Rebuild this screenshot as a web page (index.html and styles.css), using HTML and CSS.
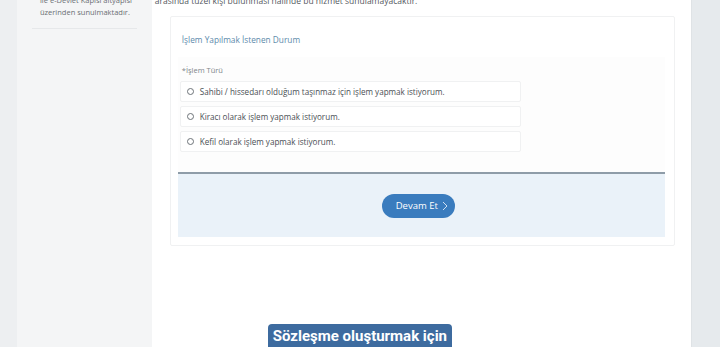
FILE: index.html
```html
<!DOCTYPE html>
<html>

<head>
    <meta charset="UTF-8">
    <title>İşlem Yapılmak İstenen Durum</title>
    <link rel="stylesheet" href="styles.css">
</head>

<body>
    <div id="edgeLeft"></div>
    <div id="sidebar">
        <p class="sideNote">ile e-Devlet Kapısı altyapısı<br>üzerinden sunulmaktadır.</p>
        <div class="sideRule"></div>
    </div>

    <div id="main">
        <p class="intro">arasında tüzel kişi bulunması halinde bu hizmet sunulamayacaktır.</p>

        <form id="durumForm" class="card">
            <div class="cardTitle">İşlem Yapılmak İstenen Durum</div>
            <div class="cardBody">
                <div class="fieldLabel">*İşlem Türü</div>
                <label class="option"><span class="radio"></span>Sahibi / hissedarı olduğum taşınmaz için işlem yapmak istiyorum.</label>
                <label class="option"><span class="radio"></span>Kiracı olarak işlem yapmak istiyorum.</label>
                <label class="option"><span class="radio"></span>Kefil olarak işlem yapmak istiyorum.</label>
            </div>
            <div class="cardFooter">
                <button type="button" class="nextButton">Devam Et
                    <svg width="6" height="10" viewBox="0 0 6 10"><path d="M1 1 L5 5 L1 9" fill="none" stroke="#cfe0f2" stroke-width="1"/></svg>
                </button>
            </div>
        </form>

        <div class="caption">Sözleşme oluşturmak için</div>
    </div>

    <div id="edgeRight"></div>
</body>

</html>
```

FILE: styles.css
```css
body {
    display: flex;
    margin: 0;
    height: 347px;
    overflow: hidden;
    font-family: "Open Sans", "Liberation Sans", sans-serif;
    background-color: #eef0f2;
}

#edgeLeft {
    width: 17px;
    background-color: #edeff1;
}

#sidebar {
    width: 135px;
    background-color: #f4f5f6;
}

.sideNote {
    margin: -6px 0 0 23px;
    font-size: 7.5px;
    line-height: 12px;
    color: #6a6f74;
}

.sideRule {
    height: 1px;
    margin: 10px 15px 0 15px;
    background-color: #e6e8ea;
}

#main {
    position: relative;
    width: 540px;
    background-color: #ffffff;
}

.intro {
    margin: -5px 0 0 3px;
    font-size: 8.5px;
    line-height: 12px;
    color: #555a5f;
}

.card {
    width: 487px;
    margin: 9px 0 0 18px;
    padding: 0 9px 8px 7px;
    border: 1px solid #f0f1f2;
    border-radius: 2px;
}

.cardTitle {
    padding: 17px 0 0 4px;
    height: 23px;
    font-size: 8.3px;
    color: #5d8aab;
}

.cardBody {
    padding: 6px 0 20px 0;
    background-color: #fdfdfd;
}

.fieldLabel {
    margin-left: 4px;
    font-size: 7.5px;
    line-height: 14px;
    color: #80868b;
}

.option {
    display: flex;
    align-items: center;
    width: 333px;
    height: 19px;
    margin: 4px 0 0 2px;
    padding-left: 6px;
    border: 1px solid #f0f1f2;
    border-radius: 2px;
    background-color: #ffffff;
    font-size: 8.1px;
    color: #4a4f54;
}

.option + .option {
    margin-top: 4px;
}

.radio {
    width: 5px;
    height: 5px;
    margin-right: 6px;
    border: 1px solid #6d7378;
    border-radius: 50%;
}

.cardFooter {
    display: flex;
    justify-content: center;
    align-items: center;
    height: 63px;
    border-top: 2px solid #8e9ca8;
    background-color: #eaf2f9;
}

.nextButton {
    display: flex;
    align-items: center;
    gap: 4px;
    height: 24px;
    margin-right: 6px;
    padding: 0 7px 0 14px;
    border: none;
    border-radius: 12px;
    background-color: #3a7cbe;
    font-family: "Open Sans", "Liberation Sans", sans-serif;
    font-size: 9.5px;
    color: #ffffff;
}

.caption {
    position: absolute;
    left: 116px;
    bottom: -3px;
    padding: 2px 5px 4px 5px;
    border-radius: 4px;
    background-color: #3d6b9f;
    font-family: Roboto, "Liberation Sans", sans-serif;
    font-weight: bold;
    font-size: 15px;
    line-height: 20px;
    color: #ffffff;
}

#edgeRight {
    width: 28px;
    border-left: 1px solid #dfe3e6;
    background-color: #e6eaed;
}
```
